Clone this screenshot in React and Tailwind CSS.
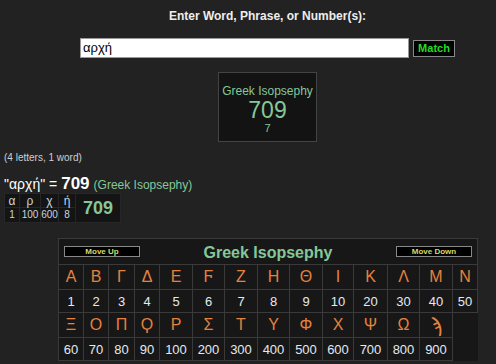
import React from 'react';

const row1 = [
  ['Α', 1], ['Β', 2], ['Γ', 3], ['Δ', 4], ['Ε', 5], ['Ϝ', 6], ['Ζ', 7],
  ['Η', 8], ['Θ', 9], ['Ι', 10], ['Κ', 20], ['Λ', 30], ['Μ', 40], ['Ν', 50],
];

const row2 = [
  ['Ξ', 60], ['Ο', 70], ['Π', 80], ['Ϙ', 90], ['Ρ', 100], ['Σ', 200], ['Τ', 300],
  ['Υ', 400], ['Φ', 500], ['Χ', 600], ['Ψ', 700], ['Ω', 800], ['ϡ', 900],
];

const colWidths = [25, 25, 26, 25, 33, 32, 33, 32, 33, 31, 34, 32, 33, 25];

const word = [['α', 1, 15], ['ρ', 100, 21], ['χ', 600, 18], ['ή', 8, 17]];

function MoveButton({ children }) {
  return (
    <button className="w-[76px] h-[11px] bg-black border border-[#888] text-[#d8d86a] text-[8px] font-bold leading-[9px]">
      {children}
    </button>
  );
}

export default function App() {
  return (
    <div className="min-h-[364px] bg-[#222222] font-['Liberation_Sans','DejaVu_Sans',sans-serif] text-[#e6e6e6] overflow-hidden">
      {/* Centered block */}
      <div className="pl-[39px] flex flex-col items-center">
        <h1 className="pt-[9px] text-[12px] font-bold leading-[14px] text-[#eeeeee]">
          Enter Word, Phrase, or Number(s):
        </h1>
        <div className="mt-[15px] flex items-center gap-[4px]">
          <div className="w-[329px] h-[20px] bg-white border border-[#999] flex items-center px-[2px] text-[13px] text-black">
            αρχή
          </div>
          <button className="w-[42px] h-[17px] bg-black border border-[#888] text-[#22dd22] text-[11px] font-bold leading-[15px]">
            Match
          </button>
        </div>
        <div className="mt-[14px] w-[99px] h-[70px] bg-[#131313] border border-[#444] flex flex-col items-center">
          <div className="mt-[11px] text-[12px] leading-[14px] text-[#86c79a]">Greek Isopsephy</div>
          <div className="text-[23px] leading-[24px] text-[#86c79a]">709</div>
          <div className="text-[11px] leading-[13px] text-[#86c79a]">7</div>
        </div>
      </div>

      {/* Result summary */}
      <div className="pl-[4px]">
        <div className="mt-[10px] text-[10px] leading-[12px] text-[#cfcfcf]">(4 letters, 1 word)</div>
        <div className="mt-[7px] flex items-baseline h-[19px]">
          <span className="text-[14px] text-white">"αρχή" = </span>
          <span className="ml-[4px] text-[17px] font-bold text-white">709</span>
          <span className="ml-[4px] text-[12px] text-[#86c79a]">(Greek Isopsephy)</span>
        </div>
        <table className="mt-[3px] border-collapse bg-[#141414] table-fixed">
          <tbody>
            <tr>
              {word.map(([l, , w], i) => (
                <td key={i} style={{ width: w }} className="h-[14px] text-center text-[12px] leading-[12px] text-[#c9d4df] border border-[#262626]">
                  {l}
                </td>
              ))}
              <td rowSpan={2} className="w-[45px] text-center text-[18px] font-bold text-[#86c79a] border border-[#262626]">
                709
              </td>
            </tr>
            <tr>
              {word.map(([, v], i) => (
                <td key={i} className="h-[15px] text-center text-[10px] leading-[12px] text-[#c9d4df] border border-[#262626]">
                  {v}
                </td>
              ))}
            </tr>
          </tbody>
        </table>
      </div>

      {/* Letter value chart */}
      <div className="pl-[58px] mt-[15px]">
        <table className="border-collapse bg-[#171717] table-fixed">
          <colgroup>
            {colWidths.map((w, i) => (
              <col key={i} style={{ width: w }} />
            ))}
          </colgroup>
          <tbody>
            <tr>
              <td colSpan={14} className="h-[26px] border border-[#3a3a3a] px-[5px]">
                <div className="flex items-center justify-between">
                  <MoveButton>Move Up</MoveButton>
                  <span className="text-[16px] font-bold text-[#86c79a] leading-[18px] mt-[3px]">Greek Isopsephy</span>
                  <MoveButton>Move Down</MoveButton>
                </div>
              </td>
            </tr>
            {[row1, row2].map((row, r) => (
              <React.Fragment key={r}>
                <tr>
                  {row.map(([l], i) => (
                    <td key={i} className={`h-[25px] border border-[#3a3a3a] text-center text-[#e5823f] leading-[18px] ${l === 'ϡ' ? 'text-[20px]' : 'text-[16px]'}`}>
                      {l}
                    </td>
                  ))}
                </tr>
                <tr>
                  {row.map(([, v], i) => (
                    <td key={i} className="h-[23px] border border-[#3a3a3a] text-center text-[13px] text-[#e3eaf1] leading-[15px]">
                      {v}
                    </td>
                  ))}
                </tr>
              </React.Fragment>
            ))}
          </tbody>
        </table>
      </div>
    </div>
  );
}
